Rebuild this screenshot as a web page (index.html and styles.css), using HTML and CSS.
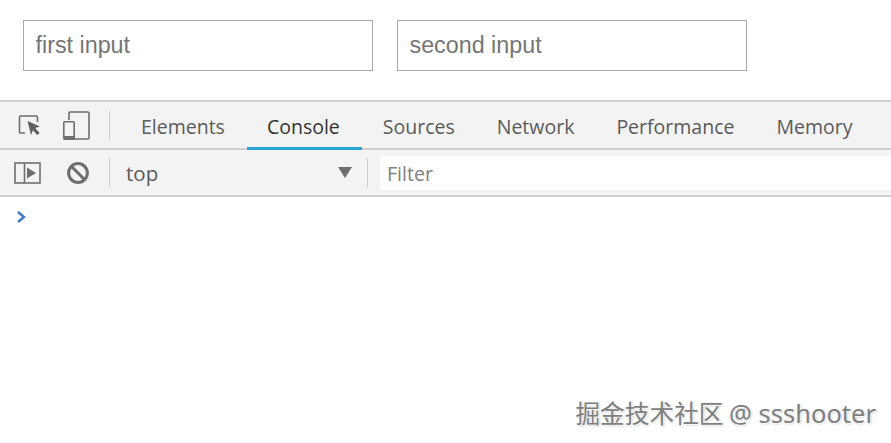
FILE: index.html
```html
<!DOCTYPE html>
<html lang="en">
<head>
  <meta charset="UTF-8" />
  <title>Inputs</title>
  <link rel="stylesheet" href="styles.css">
</head>
<body>
  <section class="demo">
    <input class="demo-input" type="text" placeholder="first input" />
    <input class="demo-input" type="text" placeholder="second input" />
  </section>

  <section class="devtools">
    <div class="tabbar">
      <svg class="icon icon-inspect" width="26" height="28" viewBox="0 0 26 28">
        <path d="M8 22H3.5a1 1 0 0 1-1-1V6a1 1 0 0 1 1-1h16a1 1 0 0 1 1 1v5" fill="none" stroke="#6e6e6e" stroke-width="1.6"/>
        <path d="M10.5 10l12.5 5.5-4.8 1.6 4.4 4.8-2.4 2.2-4.2-4.8-2 4.6z" fill="#5f5f5f"/>
      </svg>
      <svg class="icon icon-device" width="28" height="30" viewBox="0 0 28 30">
        <path d="M7 10V3a1 1 0 0 1 1-1h18a1 1 0 0 1 1 1v25a1 1 0 0 1-1 1H11" fill="none" stroke="#6e6e6e" stroke-width="1.6"/>
        <rect x="1.8" y="11.8" width="10.4" height="17.4" rx="1" fill="none" stroke="#6e6e6e" stroke-width="1.6"/>
        <rect x="2" y="26" width="10" height="3" fill="#6e6e6e"/>
      </svg>
      <span class="divider divider-tabs"></span>
      <nav class="tabs">
        <a class="tab">Elements</a>
        <a class="tab active">Console</a>
        <a class="tab">Sources</a>
        <a class="tab">Network</a>
        <a class="tab">Performance</a>
        <a class="tab">Memory</a>
      </nav>
    </div>

    <div class="filterbar">
      <svg class="icon icon-sidebar" width="27" height="24" viewBox="0 0 27 24">
        <rect x="1" y="2" width="25" height="20" fill="none" stroke="#6e6e6e" stroke-width="1.6"/>
        <path d="M10.5 2v20" stroke="#6e6e6e" stroke-width="1.6"/>
        <path d="M13 6.5l9 5.5-9 5.5z" fill="#6e6e6e"/>
      </svg>
      <svg class="icon icon-clear" width="24" height="24" viewBox="0 0 24 24">
        <circle cx="12" cy="12" r="9.4" fill="none" stroke="#6e6e6e" stroke-width="3"/>
        <path d="M5.5 5.5l13 13" stroke="#6e6e6e" stroke-width="3"/>
      </svg>
      <span class="divider divider-context"></span>
      <div class="context">
        <span>top</span>
        <span class="caret"></span>
      </div>
      <span class="divider divider-filter"></span>
      <div class="filter">Filter</div>
    </div>

    <div class="console">
      <svg width="11" height="14" viewBox="0 0 11 14">
        <path d="M2 2l6 5-6 5" fill="none" stroke="#3f78c4" stroke-width="2.4"/>
      </svg>
    </div>
  </section>

  <div class="watermark">掘金技术社区 <span class="watermark-name">@ ssshooter</span></div>
</body>
</html>
```

FILE: styles.css
```css
* { margin: 0; padding: 0; box-sizing: border-box; }
body {
  width: 891px;
  height: 443px;
  overflow: hidden;
  position: relative;
  background: #fff;
  font-family: "Open Sans", sans-serif;
}
.demo {
  display: flex;
  gap: 24px;
  height: 100px;
  padding: 20px 0 0 23px;
}
.demo-input {
  width: 350px;
  height: 51px;
  padding: 0 11.5px;
  border: 1px solid #a9a9a9;
  font-family: "Liberation Sans", sans-serif;
  font-size: 23.3px;
  outline: none;
}
.demo-input::placeholder {
  color: #757575;
  opacity: 1;
}
.devtools {
  display: flex;
  flex-direction: column;
}
.icon {
  flex: none;
}
.tabbar {
  display: flex;
  align-items: center;
  height: 50px;
  background: #f3f3f3;
  border-top: 2px solid #d0d0d0;
  border-bottom: 2px solid #d0d0d0;
}
.icon-inspect {
  margin-left: 17px;
}
.icon-device {
  margin-left: 19px;
}
.divider {
  flex: none;
  width: 1px;
  height: 29px;
  background: #cfcfcf;
}
.divider-tabs {
  margin-left: 19px;
}
.tabs {
  display: flex;
  align-self: stretch;
  margin-left: 10px;
}
.tab {
  display: flex;
  align-items: center;
  padding: 0 21px;
  height: 48px;
  font-size: 19.5px;
  color: #5a5a5a;
}
.tab.active {
  margin-left: 1px;
  padding: 3px 22px 0 20px;
  color: #333;
  border-bottom: 3px solid #2aa3d6;
}
.filterbar {
  display: flex;
  align-items: center;
  height: 47px;
  background: #f3f3f3;
  border-bottom: 2px solid #d0d0d0;
}
.icon-sidebar {
  margin-left: 14px;
}
.icon-clear {
  margin-left: 25px;
}
.divider-context {
  margin-left: 19px;
}
.context {
  display: flex;
  align-items: center;
  justify-content: space-between;
  width: 257px;
  padding: 0 15px 0 16px;
  font-size: 20.5px;
  color: #5a5a5a;
}
.caret {
  width: 0;
  height: 0;
  border-left: 7px solid transparent;
  border-right: 7px solid transparent;
  border-top: 11px solid #6e6e6e;
}
.filter {
  flex: 1;
  height: 34px;
  margin-left: 12px;
  padding: 1px 0 0 7px;
  background: #fff;
  font-size: 19.6px;
  line-height: 34px;
  color: #808080;
}
.console {
  padding: 13px 0 0 16px;
}
.console svg {
  display: block;
}
.watermark {
  position: absolute;
  right: 15px;
  bottom: 15px;
  font-family: "Noto Sans CJK SC", sans-serif;
  font-size: 24.7px;
  line-height: 30px;
  color: #7f7f7f;
  text-shadow: 1px 1px 1px #fff, 1px 1px 2px #aaa;
}
.watermark-name {
  font-family: "Noto Sans", "Open Sans", sans-serif;
  font-size: 25.5px;
}
```
